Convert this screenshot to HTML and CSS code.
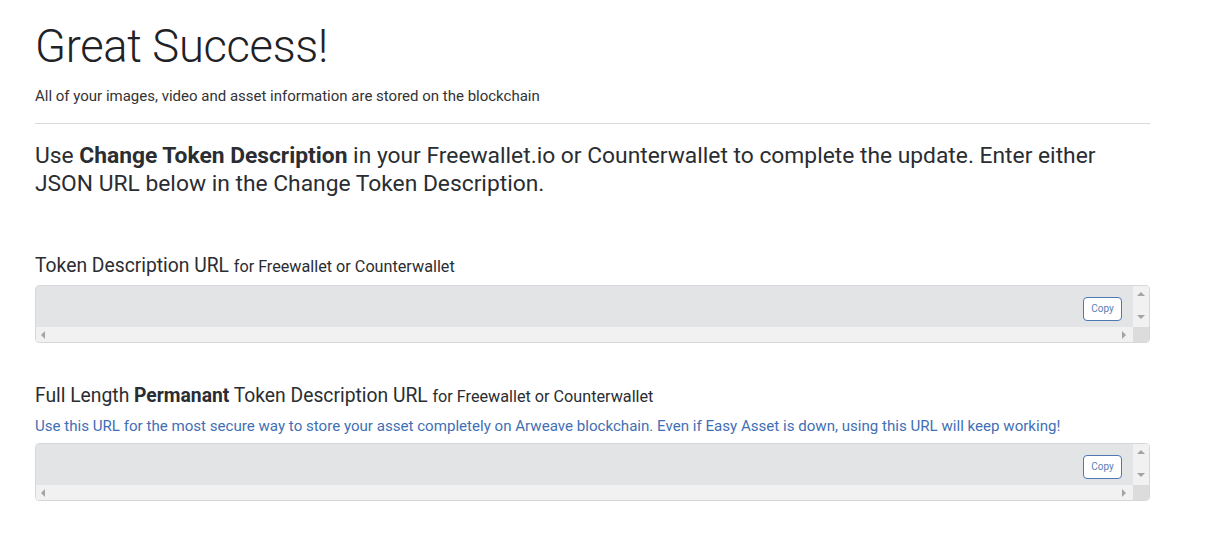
FILE: index.html
```html
<!DOCTYPE html>
<html lang="en">
<head>
<meta charset="utf-8">
<title>Great Success!</title>
<link rel="stylesheet" href="styles.css">
</head>
<body>
<main class="page">
  <h1 class="title">Great Success!</h1>
  <p class="subtitle">All of your images, video and asset information are stored on the blockchain</p>
  <hr class="divider">
  <p class="lead">Use <b>Change Token Description</b> in your Freewallet.io or Counterwallet to complete the update. Enter either JSON URL below in the Change Token Description.</p>

  <section class="field field-first">
    <h5 class="label">Token Description URL <small>for Freewallet or Counterwallet</small></h5>
    <div class="box">
      <div class="scroller">
        <textarea class="url" readonly></textarea>
        <div class="vbar"><span class="arr up"></span><span class="arr down"></span></div>
        <div class="hbar"><span class="arr left"></span><span class="arr right"></span></div>
        <div class="corner"></div>
      </div>
      <button class="copy" type="button">Copy</button>
    </div>
  </section>

  <section class="field">
    <h5 class="label">Full Length <b>Permanant</b> Token Description URL <small>for Freewallet or Counterwallet</small></h5>
    <p class="hint">Use this URL for the most secure way to store your asset completely on Arweave blockchain. Even if Easy Asset is down, using this URL will keep working!</p>
    <div class="box">
      <div class="scroller">
        <textarea class="url" readonly></textarea>
        <div class="vbar"><span class="arr up"></span><span class="arr down"></span></div>
        <div class="hbar"><span class="arr left"></span><span class="arr right"></span></div>
        <div class="corner"></div>
      </div>
      <button class="copy" type="button">Copy</button>
    </div>
  </section>
</main>
</body>
</html>
```

FILE: styles.css
```css
* { box-sizing: border-box; }
html, body { margin: 0; padding: 0; background: #fff; }
body {
  font-family: Roboto, "Liberation Sans", sans-serif;
  color: #212529;
}
.page {
  width: 1150px;
  padding: 20px 0 0 35px;
}
.title {
  margin: 0;
  font-size: 45.3px;
  font-weight: 300;
  line-height: 54px;
  color: #1f2226;
  letter-spacing: -0.3px;
}
.subtitle {
  margin: 12px 0 0;
  font-size: 15px;
  line-height: 20px;
  color: #333;
}
.divider {
  margin: 17px 0 0;
  border: 0;
  border-top: 1px solid #d9d9d9;
  height: 0;
}
.lead {
  margin: 18px 0 0;
  font-size: 22.8px;
  line-height: 28px;
  font-weight: 400;
  color: #2a2d31;
  width: 1090px;
}
.lead b { font-weight: 700; }
.field { margin-top: 41px; }
.field-first { margin-top: 56px; }
.label {
  margin: 0;
  font-size: 19.3px;
  font-weight: 400;
  line-height: 24px;
  color: #2a2d31;
}
.label b { font-weight: 700; }
.label small { font-size: 16.2px; }
.hint {
  margin: 7px 0 0;
  font-size: 15.1px;
  line-height: 20px;
  color: #3f6fb5;
}
.box {
  position: relative;
  width: 1115px;
  margin-top: 6px;
}
.hint + .box { margin-top: 7px; }
.scroller {
  display: grid;
  grid-template-columns: 1fr 16px;
  grid-template-rows: 41px 15px;
  border: 1px solid #d5d7da;
  border-radius: 4px;
  overflow: hidden;
}
.url {
  display: block;
  width: 100%;
  height: 100%;
  margin: 0;
  padding: 6px 12px;
  border: 0;
  background: #e3e4e6;
  overflow: hidden;
  resize: none;
  font-family: inherit;
  font-size: 14px;
  color: #495057;
  outline: none;
}
.vbar {
  display: flex;
  flex-direction: column;
  align-items: center;
  justify-content: space-between;
  padding: 6px 0 8px;
  background: #f1f1f1;
}
.hbar {
  display: flex;
  align-items: center;
  justify-content: space-between;
  padding: 0 7px 0 5px;
  background: #f1f1f1;
}
.corner { background: #dcdcdc; }
.arr {
  display: block;
  width: 0;
  height: 0;
  border-style: solid;
  border-color: transparent;
}
.arr.up { border-width: 0 4px 4px; border-bottom-color: #a3a3a3; }
.arr.down { border-width: 4px 4px 0; border-top-color: #a3a3a3; }
.arr.left { border-width: 4px 4px 4px 0; border-right-color: #a3a3a3; }
.arr.right { border-width: 4px 0 4px 4px; border-left-color: #a3a3a3; }
.copy {
  position: absolute;
  top: 12px;
  right: 28px;
  width: 39px;
  height: 24px;
  padding: 0;
  border: 1px solid #4d78b3;
  border-radius: 4px;
  background: #fff;
  color: #5a7fb3;
  font-family: inherit;
  font-size: 10px;
  line-height: 22px;
  cursor: pointer;
}
```
